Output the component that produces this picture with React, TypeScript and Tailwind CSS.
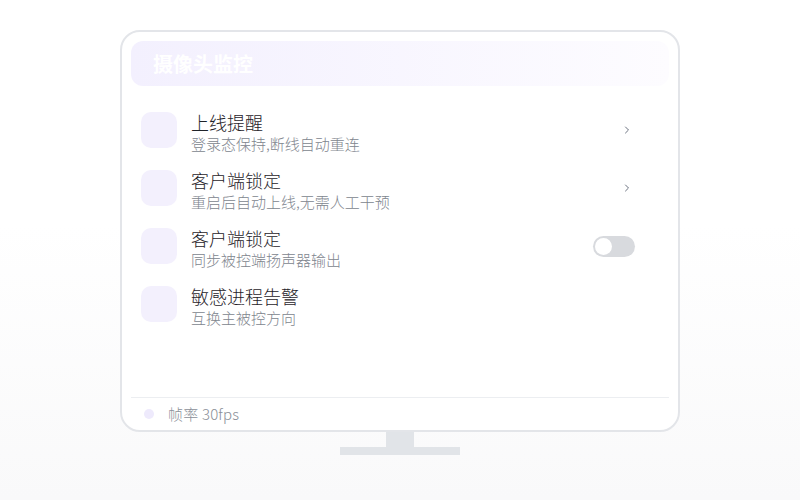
import { ChevronRight } from "lucide-react"

const rows = [
  { title: "上线提醒", sub: "登录态保持,断线自动重连", right: "chevron" },
  { title: "客户端锁定", sub: "重启后自动上线,无需人工干预", right: "chevron" },
  { title: "客户端锁定", sub: "同步被控端扬声器输出", right: "toggle" },
  { title: "敏感进程告警", sub: "互换主被控方向", right: "none" },
]

export default function App() {
  return (
    <div
      className="w-[800px] h-[500px] bg-gradient-to-b from-white from-45% to-[#f9f9fa] flex flex-col items-center pt-[30px]"
      style={{ fontFamily: '"Noto Sans CJK SC", "Noto Sans", sans-serif' }}
    >
      <div className="w-[560px] h-[402px] rounded-[20px] border-2 border-[#e3e5e9] bg-white flex flex-col pt-[9px] px-[9px]">
        <div className="h-[45px] rounded-[12px] bg-gradient-to-r from-[#f3f0fe] to-[#fdfcff] flex items-center px-[22px]">
          <span className="text-[20px] font-bold text-white leading-none">摄像头监控</span>
        </div>

        <div className="flex flex-col gap-[22px] pt-[26px] px-[10px]">
          {rows.map((r, i) => (
            <div key={i} className="flex items-center h-[36px]">
              <div className="w-[36px] h-[36px] rounded-[10px] bg-[#f3f0fd]" />
              <div className="flex flex-col ml-[14px] flex-1 mt-[4px]">
                <span className="text-[18px] leading-[24px] font-light text-[#1f2329]">{r.title}</span>
                <span className="text-[15px] leading-[20px] font-light text-[#80858e]">{r.sub}</span>
              </div>
              {r.right === "chevron" && (
                <ChevronRight className="w-[12px] h-[12px] text-[#6b7280] mr-[26px]" strokeWidth={2} />
              )}
              {r.right === "toggle" && (
                <div className="w-[42px] h-[21px] rounded-full bg-[#d8dade] p-[2px] mr-[24px]">
                  <div className="w-[17px] h-[17px] rounded-full bg-white" />
                </div>
              )}
            </div>
          ))}
        </div>

        <div className="mt-auto border-t border-[#eceef1] h-[33px] flex items-center px-[13px]">
          <div className="w-[10px] h-[10px] rounded-full bg-[#eeeafc]" />
          <span className="ml-[14px] text-[15px] font-light text-[#8a8f98] tracking-[0.2px]">帧率 30fps</span>
        </div>
      </div>
      <div className="w-[28px] h-[15px] bg-[#e1e4e8]" />
      <div className="w-[120px] h-[8px] bg-[#e1e4e8]" />
    </div>
  )
}
